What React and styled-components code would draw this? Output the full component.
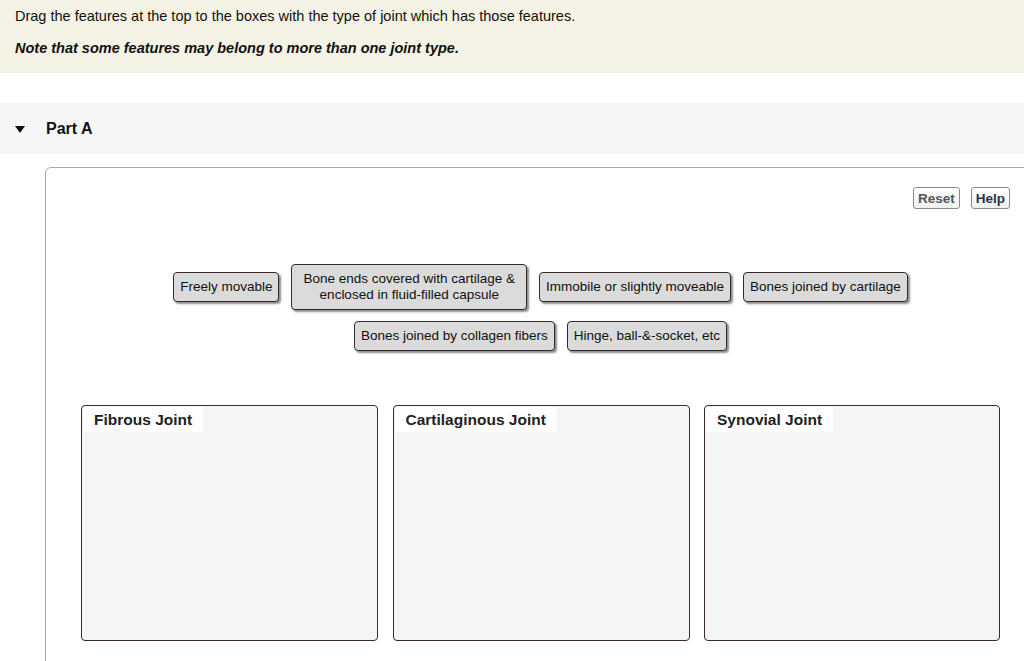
import React from 'react';
import styled, { createGlobalStyle } from 'styled-components';

const GlobalStyle = createGlobalStyle`
  html, body {
    margin: 0;
    padding: 0;
    background: #fff;
    overflow: hidden;
  }
  body {
    font-family: "Liberation Sans", Arial, Helvetica, sans-serif;
    color: #111;
  }
`;

const Page = styled.div`
  width: 1024px;
  height: 661px;
  overflow: hidden;
`;

const Intro = styled.div`
  background: #f5f3e5;
  padding: 8px 15px 16px;
  font-size: 14.5px;
  line-height: 17px;
`;

const IntroLine = styled.p`
  margin: 0 0 15px;
  font-weight: ${(p) => (p.$strong ? 'bold' : 'normal')};
  font-style: ${(p) => (p.$strong ? 'italic' : 'normal')};
  &:last-child {
    margin-bottom: 0;
  }
`;

const PartHeader = styled.div`
  margin-top: 30px;
  height: 51px;
  background: #f6f6f6;
  display: flex;
  align-items: center;
  padding-left: 15px;
  gap: 21px;
  font-size: 16px;
  font-weight: bold;
  color: #111;
`;

const Caret = styled.span`
  width: 0;
  height: 0;
  border-left: 5.5px solid transparent;
  border-right: 5.5px solid transparent;
  border-top: 7px solid #111;
  margin-top: 1px;
`;

const Workspace = styled.div`
  margin: 13px 0 0 45px;
  width: 992px;
  height: 520px;
  box-sizing: border-box;
  border: 1px solid #aaa;
  border-top-left-radius: 6px;
  padding: 19px 26px 0 35px;
`;

const Toolbar = styled.div`
  display: flex;
  justify-content: flex-end;
  gap: 11px;
`;

const ToolButton = styled.button`
  height: 22px;
  padding: 0 4px;
  font-family: "Liberation Sans", Arial, sans-serif;
  font-size: 13.5px;
  font-weight: bold;
  color: ${(p) => p.$color || '#555'};
  background: linear-gradient(#ffffff, #f0f0f0);
  border: 1px solid #8a8a8a;
  border-radius: 3px;
`;

const Tray = styled.div`
  margin: 55px 10px 0 0;
  display: flex;
  flex-direction: column;
  align-items: center;
  gap: 11px;
`;

const TrayRow = styled.div`
  display: flex;
  align-items: center;
  justify-content: center;
  gap: 12px;
`;

const Chip = styled.div`
  box-sizing: border-box;
  background: #dcdbdb;
  border: 1px solid #3a2828;
  border-radius: 4px;
  box-shadow: 2px 2px 2px rgba(0, 0, 0, 0.45);
  padding: ${(p) => (p.$wide ? '6px 11px' : '6px 6px')};
  font-size: 13.5px;
  line-height: 16px;
  text-align: center;
  color: #111;
  white-space: nowrap;
`;

const Bins = styled.div`
  margin-top: 54px;
  display: grid;
  grid-template-columns: 297px 297px 296px;
  column-gap: 14.5px;
`;

const Bin = styled.div`
  height: 236px;
  box-sizing: border-box;
  background: #f5f5f5;
  border: 1px solid #3f2a2a;
  border-radius: 4px;
  padding: 1px;
`;

const BinLabel = styled.div`
  display: inline-block;
  background: #fff;
  padding: 3px 11px 3px;
  font-size: 15.5px;
  line-height: 19px;
  font-weight: bold;
  color: #222;
`;

const rowOne = [
  ['Freely movable'],
  ['Bone ends covered with cartilage &', 'enclosed in fluid-filled capsule'],
  ['Immobile or slightly moveable'],
  ['Bones joined by cartilage'],
];

const rowTwo = [['Bones joined by collagen fibers'], ['Hinge, ball-&-socket, etc']];

const bins = ['Fibrous Joint', 'Cartilaginous Joint', 'Synovial Joint'];

const FeatureChip = ({ lines }) => (
  <Chip $wide={lines.length > 1}>
    {lines.map((line, i) => (
      <div key={i}>{line}</div>
    ))}
  </Chip>
);

export default function App() {
  return (
    <Page>
      <GlobalStyle />
      <Intro>
        <IntroLine>
          Drag the features at the top to the boxes with the type of joint which has those features.
        </IntroLine>
        <IntroLine $strong>Note that some features may belong to more than one joint type.</IntroLine>
      </Intro>

      <PartHeader>
        <Caret />
        <span>Part A</span>
      </PartHeader>

      <Workspace>
        <Toolbar>
          <ToolButton>Reset</ToolButton>
          <ToolButton $color="#2b3350">Help</ToolButton>
        </Toolbar>

        <Tray>
          <TrayRow>
            {rowOne.map((lines) => (
              <FeatureChip key={lines[0]} lines={lines} />
            ))}
          </TrayRow>
          <TrayRow>
            {rowTwo.map((lines) => (
              <FeatureChip key={lines[0]} lines={lines} />
            ))}
          </TrayRow>
        </Tray>

        <Bins>
          {bins.map((name) => (
            <Bin key={name}>
              <BinLabel>{name}</BinLabel>
            </Bin>
          ))}
        </Bins>
      </Workspace>
    </Page>
  );
}
